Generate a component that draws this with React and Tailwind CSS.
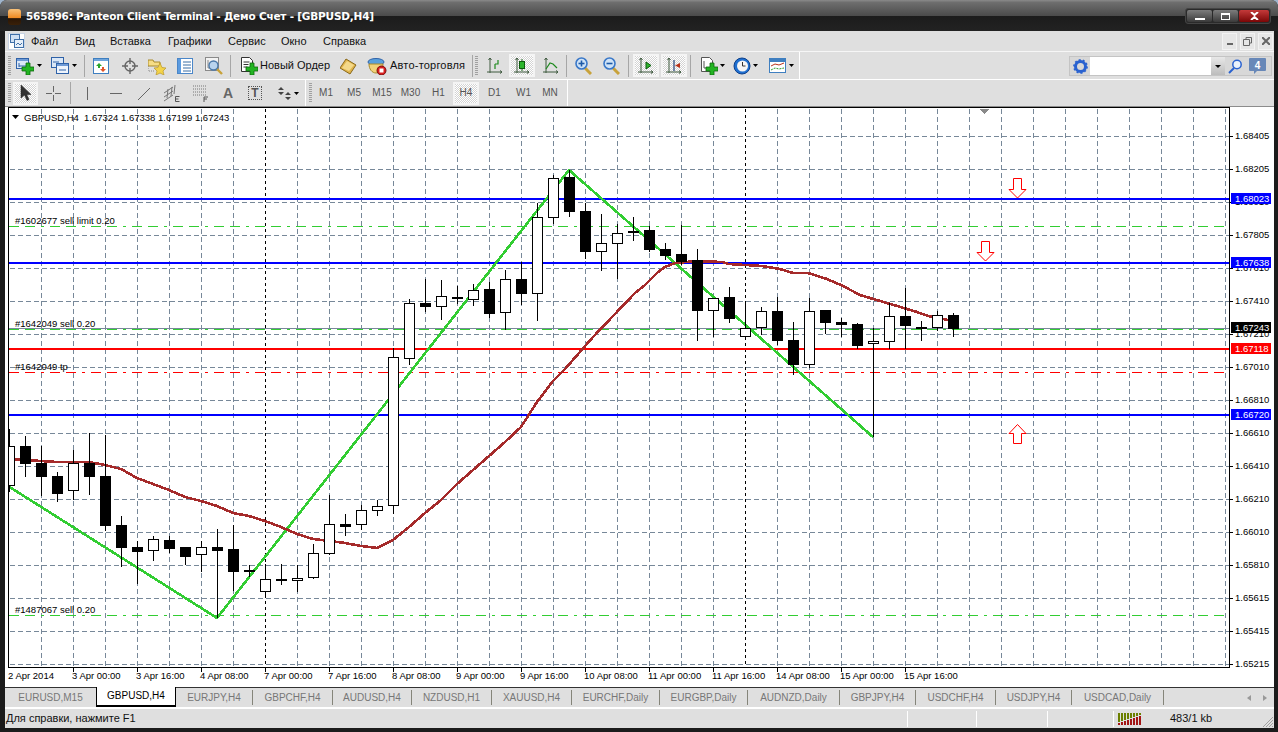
import { Fragment } from 'react';

const candles = [
  [446, 486, 429, 492, 1], [446, 464, 436, 477, 0], [463, 477, 446, 496, 0], [476, 494, 472, 502, 0],
  [463, 491, 450, 500, 1], [463, 477, 433, 495, 0], [476, 526, 435, 531, 0], [525, 548, 516, 567, 0],
  [547, 552, 541, 584, 0], [539, 551, 536, 561, 1], [540, 549, 536, 553, 0], [547, 557, 547, 565, 0],
  [547, 555, 541, 572, 1], [547, 551, 529, 618, 0], [549, 572, 525, 591, 0], [570, 572, 565, 577, 0],
  [579, 592, 564, 598, 1], [579, 581, 564, 585, 0], [578, 581, 565, 592, 1], [553, 578, 544, 579, 1],
  [524, 554, 495, 555, 1], [524, 527, 514, 536, 0], [510, 525, 505, 530, 1], [506, 511, 500, 516, 1],
  [357, 506, 348, 514, 1], [303, 359, 299, 365, 1], [303, 307, 279, 312, 0], [296, 307, 280, 320, 1],
  [297, 299, 286, 304, 0], [290, 300, 284, 306, 1], [289, 314, 282, 318, 0], [279, 313, 270, 330, 1],
  [279, 294, 262, 305, 0], [217, 294, 203, 321, 1], [178, 218, 175, 224, 1], [177, 212, 170, 217, 0],
  [211, 252, 203, 259, 0], [243, 252, 214, 271, 1], [233, 244, 224, 279, 1], [231, 233, 217, 241, 1],
  [230, 250, 226, 252, 0], [249, 256, 243, 260, 0], [254, 262, 225, 265, 0], [260, 311, 249, 341, 0],
  [298, 311, 298, 337, 1], [297, 319, 287, 323, 0], [328, 337, 302, 340, 1], [311, 328, 307, 335, 1],
  [311, 341, 297, 345, 0], [340, 365, 322, 375, 0], [311, 365, 298, 368, 1], [310, 323, 310, 334, 0],
  [322, 325, 318, 337, 0], [324, 346, 323, 349, 0], [341, 344, 328, 437, 1], [316, 342, 303, 349, 1],
  [316, 326, 288, 349, 0], [327, 328, 321, 341, 0], [315, 328, 311, 331, 1], [315, 329, 313, 337, 0],
];

const maLine = '9,459 25,460 41,461 57,462 73,462 89,462 105,465 121,469 137,478 153,484 169,490 185,497 201,501 217,506 233,513 249,516 265,521 281,527 297,534 313,539 329,541 345,543 361,546 377,548 393,540 409,527 425,513 441,500 457,484 473,470 489,456 505,442 521,427 537,402 553,381 565,369 593,337 635,293 645,285 657,273 665,267 675,263 697,261 722,262 729,264 762,266 780,269 793,273 808,273 827,279 843,286 860,295 880,301 897,306 917,312 928,316 948,320';

const priceLabels = [
  [136, '1.68405'], [169, '1.68205'], [202, '1.68010'], [235, '1.67805'], [268, '1.67610'], [301, '1.67410'],
  [334, '1.67210'], [367, '1.67010'], [400, '1.66810'], [433, '1.66610'], [466, '1.66410'], [499, '1.66210'],
  [532, '1.66010'], [565, '1.65810'], [598, '1.65615'], [631, '1.65415'], [664, '1.65215'],
];

const priceTags = [
  [199, '1.68023', '#0000ff', '#ffffff'],
  [263, '1.67638', '#0000ff', '#ffffff'],
  [328, '1.67243', '#000000', '#ffffff'],
  [349, '1.67118', '#ff0000', '#ffffff'],
  [415, '1.66720', '#0000ff', '#ffffff'],
];

const timeLabels = ['3 Apr 00:00', '3 Apr 16:00', '4 Apr 08:00', '7 Apr 00:00', '7 Apr 16:00', '8 Apr 08:00', '9 Apr 00:00', '9 Apr 16:00', '10 Apr 08:00', '11 Apr 00:00', '11 Apr 16:00', '14 Apr 08:00', '15 Apr 00:00', '15 Apr 16:00'];

const tabs = [
  ['EURUSD,M15', 'w-[91px]'], ['GBPUSD,H4', 'w-[80px]'], ['EURJPY,H4', 'w-[77px]'], ['GBPCHF,H4', 'w-[80px]'],
  ['AUDUSD,H4', 'w-[79px]'], ['NZDUSD,H1', 'w-[80px]'], ['XAUUSD,H4', 'w-[80px]'], ['EURCHF,Daily', 'w-[88px]'],
  ['EURGBP,Daily', 'w-[88px]'], ['AUDNZD,Daily', 'w-[92px]'], ['GBPJPY,H4', 'w-[76px]'], ['USDCHF,H4', 'w-[80px]'],
  ['USDJPY,H4', 'w-[76px]'], ['USDCAD,Daily', 'w-[92px]'],
];

const timeframes = [
  ['M1', 'w-[28px]'], ['M5', 'w-[28px]'], ['M15', 'w-[28px]'], ['M30', 'w-[29px]'], ['H1', 'w-[27px]'],
  ['H4', 'w-[28px]'], ['D1', 'w-[29px]'], ['W1', 'w-[29px]'], ['MN', 'w-[24px]'],
];

const range = (n, f) => Array.from({ length: n }, (_, i) => f(i));

const Ico = ({ w = 18, h = 18, c = '', children }) => (
  <svg width={w} height={h} viewBox={`0 0 ${w} ${h}`} className={`shrink-0 ${c}`}>{children}</svg>
);

const Caret = ({ c = 'ml-[3px]' }) => (
  <Ico w={5} h={3} c={c}><polygon points="0,0 5,0 2.5,3" fill="#000" /></Ico>
);

const Sep = ({ c }) => <div className={`w-px h-[22px] shrink-0 bg-[#a6a6a6] ${c}`} />;

const Grip = ({ c }) => (
  <div className={`w-[3px] h-[20px] shrink-0 bg-[repeating-linear-gradient(180deg,#a0a0a0_0,#a0a0a0_1px,transparent_1px,transparent_2px)] ${c}`} />
);

const Pressed = ({ c = '', children }) => (
  <div className={`h-[23px] flex items-center justify-center shrink-0 border-2 border-[#f4f4f4] bg-[conic-gradient(#ffffff_25%,#d4d4d4_0_50%,#ffffff_0_75%,#d4d4d4_0)] bg-[length:2px_2px] ${c}`}>
    {children}
  </div>
);

const Plus = ({ x, y, s = 10 }) => {
  const t = s / 3;
  return (
    <path
      d={`M${x + t} ${y}h${t}v${t}h${t}v${t}h${-t}v${t}h${-t}v${-t}h${-t}v${-t}h${t}z`}
      fill="#22b422"
      stroke="#0d6b0d"
      strokeWidth="0.8"
    />
  );
};

const MagGlass = ({ sign }) => (
  <Ico w={17} h={18}>
    <line x1="10" y1="11" x2="16" y2="17" stroke="#c8a23a" strokeWidth="3" />
    <circle cx="6.5" cy="6.5" r="5.5" fill="#cfe3f7" stroke="#3a78c8" strokeWidth="1.6" />
    <line x1="3.5" y1="6.5" x2="9.5" y2="6.5" stroke="#1d5aa8" strokeWidth="1.6" />
    {sign === '+' && <line x1="6.5" y1="3.5" x2="6.5" y2="9.5" stroke="#1d5aa8" strokeWidth="1.6" />}
  </Ico>
);

const Axes = ({ children }) => (
  <Ico w={16} h={18}>
    <path d="M3 1v15M0 15h15M1.5 3L3 1l1.5 2M13 13.5l2 1.5-2 1.5" fill="none" stroke="#3f5a3f" strokeWidth="1" />
    {children}
  </Ico>
);

const ToolbarOne = () => (
  <div className="flex items-center w-[795px] h-[27px] border-r border-r-white">
    <Grip c="ml-[3px]" />
    <Ico c="ml-[5px]">
      <rect x=".5" y="1.5" width="12" height="10" fill="#dbe8f7" stroke="#2f62a8" />
      <rect x="1" y="2" width="11" height="2" fill="#6f9bd6" />
      <path d="M3 6v4M3 9h7" stroke="#2f62a8" fill="none" />
      <Plus x={6} y={6} s={12} />
    </Ico>
    <Caret />
    <Ico c="ml-[9px]">
      <rect x=".5" y=".5" width="12" height="10" fill="#dbe8f7" stroke="#2f62a8" />
      <rect x="5.5" y="6.5" width="12" height="10" fill="#eef4fc" stroke="#2f62a8" />
      <rect x="6" y="7" width="11" height="2" fill="#6f9bd6" />
      <path d="M8 13h7M2 5h6" stroke="#2f62a8" />
    </Ico>
    <Caret />
    <Sep c="ml-[7px]" />
    <Ico w={17} c="ml-[8px]">
      <rect x=".5" y="1.5" width="15" height="15" fill="#fff" stroke="#3f7fc0" />
      <rect x="1" y="2" width="14" height="2" fill="#6fa5dc" />
      <path d="M6 6l3 3H7v2H5V9H3z" fill="#2aa52a" />
      <path d="M10 15l-3-3h2v-2h2v2h2z" fill="#e0552a" />
    </Ico>
    <Ico w={16} c="ml-[12px]">
      <circle cx="8" cy="9" r="5" fill="none" stroke="#666" strokeWidth="1.4" />
      <path d="M8 1v6M8 11v6M0 9h6M10 9h6" stroke="#666" strokeWidth="1.4" />
    </Ico>
    <Ico c="ml-[10px]">
      <path d="M0 3h5l1 2h6v4H0z" fill="#f6dd86" stroke="#a88a2c" />
      <path d="M0 9v5h7" fill="none" stroke="#888" strokeDasharray="1 1" />
      <polygon points="12,6 14,10.5 18,11 15,14 16,18 12,16 8,18 9,14 6,11 10,10.5" fill="#f3d34a" stroke="#b8962a" strokeWidth=".7" />
    </Ico>
    <Ico w={16} c="ml-[11px]">
      <rect x=".5" y="1.5" width="15" height="15" fill="#fff" stroke="#4a86c8" />
      <rect x="1" y="2" width="3" height="14" fill="#5b9be0" />
      <path d="M6 5h8M6 8h8M6 11h8M6 14h8" stroke="#3a6ea5" />
    </Ico>
    <Ico c="ml-[12px]">
      <rect x=".5" y=".5" width="13" height="13" fill="#f3f3f3" stroke="#8a8a8a" />
      <path d="M3 3v8h8" stroke="#888" fill="none" />
      <line x1="11" y1="11" x2="17" y2="17" stroke="#c8a23a" strokeWidth="2.4" />
      <circle cx="8.5" cy="8.5" r="4.5" fill="#b9d4ee" stroke="#4a78a8" strokeWidth="1.4" />
    </Ico>
    <Sep c="ml-[7px]" />
    <Ico c="ml-[9px]">
      <path d="M1.5 .5h8l3 3v11h-11z" fill="#fff" stroke="#333" />
      <path d="M3.5 5h6M3.5 7.5h5M3.5 10h4" stroke="#333" />
      <Plus x={6} y={6} s={12} />
    </Ico>
    <span className="ml-[2px] w-[69px] text-[11px] leading-none whitespace-nowrap text-[#111]">Новый Ордер</span>
    <Ico w={17} c="ml-[11px]">
      <polygon points="0,11 6,2 16,8 10,17" fill="#e0b44c" stroke="#8a6a1c" />
      <polygon points="2,11 7,4 14,8 9,14" fill="#f4d98a" />
    </Ico>
    <Ico w={20} c="ml-[10px]">
      <ellipse cx="9" cy="5" rx="8" ry="3.5" fill="#5aa0dc" stroke="#2f62a8" />
      <path d="M2 7c0 5 3 9 7 9s7-4 7-9z" fill="#f2d27a" stroke="#a88a2c" />
      <circle cx="14.5" cy="13.5" r="4.5" fill="#d81e1e" stroke="#7a0d0d" />
      <rect x="12.5" y="11.5" width="4" height="4" fill="#fff" />
    </Ico>
    <span className="ml-[3px] w-[76px] text-[11px] leading-none whitespace-nowrap tracking-[0.2px] text-[#111]">Авто-торговля</span>
    <Sep c="ml-[6px] bg-[#8c8c8c]" />
    <Grip c="ml-[2px]" />
    <div className="ml-[9px]">
      <Axes><path d="M8 12V7M8 7h3V3" stroke="#1d8a1d" fill="none" strokeWidth="1.2" /></Axes>
    </div>
    <Pressed c="ml-[6px] w-[26px]">
      <Axes><path d="M8 2v12" stroke="#1d6b1d" /><rect x="5.5" y="4.5" width="5" height="7" fill="#2cb52c" stroke="#0d5b0d" /></Axes>
    </Pressed>
    <div className="ml-[8px]">
      <Axes><path d="M3 12l4-6 3 1 4 4" stroke="#1d8a1d" fill="none" strokeWidth="1.2" /></Axes>
    </div>
    <Sep c="ml-[7px]" />
    <div className="ml-[8px]"><MagGlass sign="+" /></div>
    <div className="ml-[11px]"><MagGlass sign="-" /></div>
    <Sep c="ml-[8px]" />
    <Pressed c="ml-[4px] w-[26px]">
      <Axes><polygon points="8,5 8,12 13,8.5" fill="#2cb52c" stroke="#0d5b0d" /></Axes>
    </Pressed>
    <Pressed c="ml-[2px] w-[26px]">
      <Axes><path d="M8 3v11" stroke="#3f5a8a" strokeWidth="1.4" /><polygon points="9,8.5 14,6 14,11" fill="#b8321a" /></Axes>
    </Pressed>
    <Sep c="ml-[3px]" />
    <Ico c="ml-[9px]">
      <path d="M1.5 .5h8l3 3v11h-11z" fill="#fff" stroke="#555" />
      <path d="M4 4v7h6" stroke="#555" fill="none" />
      <Plus x={6} y={6} s={12} />
    </Ico>
    <Caret c="ml-[2px]" />
    <Ico c="ml-[8px]">
      <circle cx="9" cy="9" r="8" fill="#1f6fd0" stroke="#0d3f8a" />
      <circle cx="9.5" cy="9" r="5.5" fill="#f4f4f4" />
      <path d="M9.5 5v4h3" stroke="#333" fill="none" />
    </Ico>
    <Caret c="ml-[2px]" />
    <Ico c="ml-[11px]">
      <rect x=".5" y="1.5" width="16" height="14" fill="#fff" stroke="#3f7fc0" />
      <rect x="1" y="2" width="15" height="3" fill="#3f7fc0" />
      <path d="M2 9l4-2 4 1 5-2" stroke="#b8321a" fill="none" />
      <path d="M2 13l4-2 4 1 5-1" stroke="#2a9a2a" fill="none" strokeDasharray="2 1" />
    </Ico>
    <Caret c="ml-[2px]" />
  </div>
);

const ToolbarTwo = () => (
  <div className="flex items-center w-[563px] h-[26px] border-r border-r-white">
    <Grip c="ml-[3px]" />
    <Pressed c="ml-[2px] w-[25px]">
      <Ico w={12} h={16}><polygon points="1,0 1,13 4.5,10 7,15.5 9,14.5 6.8,9.5 11,9.5" fill="#333" stroke="#222" strokeWidth=".5" /></Ico>
    </Pressed>
    <Ico w={15} h={15} c="ml-[8px]"><path d="M7.5 0v6M7.5 9v6M0 7.5h6M9 7.5h6" stroke="#666" strokeWidth="1" /></Ico>
    <Sep c="ml-[9px]" />
    <Ico w={15} h={15} c="ml-[9px]"><path d="M7.5 1v13" stroke="#666" /></Ico>
    <Ico w={15} h={15} c="ml-[13px]"><path d="M2 7.5h12" stroke="#666" /></Ico>
    <Ico w={15} h={15} c="ml-[13px]"><path d="M2 14L14 2" stroke="#666" /></Ico>
    <Ico w={17} h={18} c="ml-[12px]">
      <path d="M1 9l9-6M1 13l9-6M1 17l9-6M4 14l1-9M8 12l1-9M11 10l1-9" stroke="#777" fill="none" />
      <path d="M12.5 12.5h4M12.5 12.5v5h4M12.5 15h3" stroke="#555" fill="none" />
    </Ico>
    <Ico w={16} h={18} c="ml-[12px]">
      <path d="M1 2h13M1 5h13M1 8h13M1 11h13" stroke="#777" strokeDasharray="1 1" />
      <path d="M12 13v5M12 13h4M12 15h3" stroke="#555" fill="none" />
    </Ico>
    <span className="ml-[13px] w-[14px] text-center text-[14px] leading-none font-bold text-[#666]">A</span>
    <div className="ml-[13px] w-[14px] h-[14px] flex items-center justify-center border border-dotted border-[#555] text-[12px] leading-none font-bold text-[#555] shrink-0">T</div>
    <Ico w={15} h={15} c="ml-[15px]">
      <path d="M1 4l3-3 3 3zM1 6l3 3 3-3z" fill="#444" />
      <path d="M8 9l3-3 3 3zM8 11l3 3 3-3z" fill="#444" />
    </Ico>
    <Caret c="ml-[2px]" />
    <div className="ml-[6px] w-px h-[26px] bg-white shrink-0" />
    <Grip c="ml-[3px]" />
    {timeframes.map(([name, w]) => (
      <div key={name} className={`${w} h-[24px] flex items-center justify-center shrink-0`}>
        {name === 'H4' ? (
          <Pressed c="w-[26px]"><span className="text-[10px] leading-none text-[#555]">{name}</span></Pressed>
        ) : (
          <span className="text-[10px] leading-none text-[#555]">{name}</span>
        )}
      </div>
    ))}
  </div>
);

const SearchGroup = () => (
  <div className="ml-auto mr-[2px] mt-[4px] flex items-stretch h-[20px] border border-[#c4c4c4] bg-[#d8d8d8]">
    <div className="w-[20px] flex items-center justify-center">
      <Ico w={15} h={15}>
        <circle cx="7.5" cy="7.5" r="5" fill="none" stroke="#2a62d0" strokeWidth="3" />
        <circle cx="7.5" cy="7.5" r="6.6" fill="none" stroke="#2a62d0" strokeWidth="1.6" strokeDasharray="2 2.15" />
      </Ico>
    </div>
    <div className="w-[121px] bg-white" />
    <div className="w-[14px] flex items-center justify-center bg-[linear-gradient(180deg,#e8e8e8,#bcbcbc)]"><Ico w={6} h={3}><polygon points="0,0 6,0 3,3" fill="#000" /></Ico></div>
    <div className="w-[19px] flex items-center justify-center">
      <Ico w={14} h={15}>
        <circle cx="9" cy="5.5" r="4.2" fill="#eaf2fc" stroke="#2a62d0" strokeWidth="1.5" />
        <path d="M6 9l-5 5" stroke="#2a62d0" strokeWidth="2" />
      </Ico>
    </div>
    <div className="w-[27px] flex items-center justify-center">
      <Ico w={17} h={17}>
        <path d="M1 0h15a1 1 0 0 1 1 1v11a1 1 0 0 1-1 1H8l-3 3v-3H1a1 1 0 0 1-1-1V1a1 1 0 0 1 1-1z" fill="#6888b8" />
        <text x="8.5" y="10.5" textAnchor="middle" fontSize="10" fontWeight="700" fill="#fff" fontFamily="Liberation Sans, sans-serif">4</text>
      </Ico>
    </div>
  </div>
);

const Chart = () => (
  <svg width="1269" height="579" viewBox="5 107 1269 579" className="block shrink-0" fontFamily="Liberation Sans, sans-serif" fontSize="9.5">
    <defs>
      <clipPath id="plot"><rect x="9" y="108" width="1220" height="559" /></clipPath>
    </defs>
    <rect x="5" y="107" width="1269" height="579" fill="#fff" />
    <g clipPath="url(#plot)" shapeRendering="crispEdges">
      {range(17, (i) => (
        <line key={i} x1="10" x2="1229" y1={136.5 + 33 * i} y2={136.5 + 33 * i} stroke="#778899" strokeDasharray="5 3" />
      ))}
      {range(38, (i) => {
        const x = 41 + 32 * i;
        const black = x === 265 || x === 745;
        return <line key={i} x1={x + 0.5} x2={x + 0.5} y1="109" y2="667" stroke={black ? '#000' : '#778899'} strokeDasharray={black ? '3 3' : '5 3'} />;
      })}
      <line x1="9" x2="1229" y1="226.5" y2="226.5" stroke="#32cd32" strokeDasharray="10 6 10 6 3 6" />
      <line x1="9" x2="1229" y1="329.5" y2="329.5" stroke="#32cd32" strokeDasharray="10 6 10 6 3 6" />
      <line x1="9" x2="1229" y1="615.5" y2="615.5" stroke="#32cd32" strokeDasharray="10 6 10 6 3 6" />
      <line x1="9" x2="1229" y1="372.5" y2="372.5" stroke="#ff0000" strokeDasharray="10 6 10 6 3 6" />
      <line x1="9" x2="1229" y1="328.5" y2="328.5" stroke="#778899" />
      <line x1="9" x2="1229" y1="199" y2="199" stroke="#0000ff" strokeWidth="2" />
      <line x1="9" x2="1229" y1="263" y2="263" stroke="#0000ff" strokeWidth="2" />
      <line x1="9" x2="1229" y1="415" y2="415" stroke="#0000ff" strokeWidth="2" />
      <line x1="9" x2="1229" y1="349" y2="349" stroke="#ff0000" strokeWidth="2" />
      <polyline points="8,486 217,618 569,170 873,437" fill="none" stroke="#32cd32" strokeWidth="2.6" />
      <polyline points={maLine} fill="none" stroke="#a52a2a" strokeWidth="2.6" />
      {candles.map(([top, bottom, high, low, up], i) => {
        const x = 9 + 16 * i;
        return (
          <Fragment key={x}>
            <line x1={x + 0.5} x2={x + 0.5} y1={high} y2={low} stroke="#000" />
            <rect x={x - 4.5} y={top + 0.5} width="10" height={Math.max(bottom - top - 1, 1)} fill={up ? '#fff' : '#000'} stroke="#000" />
          </Fragment>
        );
      })}
      <polygon points="979,109 989,109 984,114" fill="#8a8a8a" />
    </g>
    <polygon points="1013.5,178.5 1021.5,178.5 1021.5,189.5 1026,189.5 1017.5,198 1009,189.5 1013.5,189.5" fill="#fff" stroke="#ff0000" />
    <polygon points="981.5,241.5 989.5,241.5 989.5,252.5 994,252.5 985.5,261 977,252.5 981.5,252.5" fill="#fff" stroke="#ff0000" />
    <polygon points="1017.5,424.5 1026,433.5 1021.5,433.5 1021.5,443.5 1013.5,443.5 1013.5,433.5 1009,433.5" fill="#fff" stroke="#ff0000" />
    <rect x="8.5" y="107.5" width="1221" height="560" fill="none" stroke="#000" shapeRendering="crispEdges" />

    <polygon points="12,115 19,115 15.5,119" fill="#000" />
    <text x="24" y="120.5" fill="#000">GBPUSD,H4</text>
    <text x="84" y="120.5" fill="#000">1.67324 1.67338 1.67199 1.67243</text>
    <text x="15" y="223.5" fill="#000">#1602677 sell limit 0.20</text>
    <text x="15" y="327" fill="#000">#1642049 sell 0.20</text>
    <text x="15" y="370" fill="#000">#1642049 tp</text>
    <text x="15" y="613" fill="#000">#1487067 sell 0.20</text>

    {priceLabels.map(([y, t]) => (
      <Fragment key={t}>
        <line x1="1230" x2="1233" y1={y + 0.5} y2={y + 0.5} stroke="#000" shapeRendering="crispEdges" />
        <text x="1235" y={y + 3} fill="#000">{t}</text>
      </Fragment>
    ))}
    {priceTags.map(([y, t, bg, fg]) => (
      <Fragment key={t}>
        <rect x="1231" y={y - 6} width="40" height="11" fill={bg} />
        <text x="1235" y={y + 3} fill={fg}>{t}</text>
      </Fragment>
    ))}

    <text x="8" y="679" fill="#000">2 Apr 2014</text>
    {timeLabels.map((t, i) => (
      <Fragment key={t}>
        <line x1={73.5 + 64 * i} x2={73.5 + 64 * i} y1="668" y2="672" stroke="#000" shapeRendering="crispEdges" />
        <text x={72 + 64 * i} y="679" fill="#000">{t}</text>
      </Fragment>
    ))}
  </svg>
);

const App = () => {
  return (
    <div className="w-[1278px] h-[732px] overflow-hidden bg-[#9fb4cc] font-['Liberation_Sans',sans-serif]">
      <div className="w-full h-full flex flex-col rounded-t-[7px] overflow-hidden bg-[#1b1b1b]">
        {/* title bar */}
        <div className="h-[31px] shrink-0 flex items-start bg-[linear-gradient(180deg,#8a8a8a_0,#6e6e6e_8%,#4c4c4c_50%,#1c1c1c_51%,#222222_100%)]">
          <div className="ml-[8px] mt-[9px] w-[13px] h-[16px] rounded-[3px] bg-[linear-gradient(180deg,#f9c27a_0,#f08a22_55%,#2a1606_60%,#3a2008_100%)]" />
          <span className="ml-[5px] mt-[8px] text-[10.5px] leading-[17px] font-['DejaVu_Sans',sans-serif] font-bold text-white whitespace-nowrap tracking-[-0.2px]">565896: Panteon Client Terminal - Демо Счет - [GBPUSD,H4]</span>
          <div className="ml-auto mr-[7px] mt-[8px] flex h-[16px] p-px gap-px rounded-[3px] bg-[#2a2a2a] border border-[#444]">
            <div className="w-[25px] flex items-center justify-center rounded-[2px] bg-[linear-gradient(180deg,#7c7c7c,#3a3a3a)]"><div className="w-[10px] h-[2px] mt-[5px] bg-white" /></div>
            <div className="w-[25px] flex items-center justify-center rounded-[2px] bg-[linear-gradient(180deg,#7c7c7c,#3a3a3a)]"><div className="w-[9px] h-[7px] border border-white border-t-2" /></div>
            <div className="w-[30px] flex items-center justify-center rounded-[2px] bg-[linear-gradient(180deg,#c43a3a,#7a0606)]">
              <Ico w={9} h={8}><path d="M1 0l3.5 3L8 0M1 8l3.5-3L8 8" stroke="#fff" strokeWidth="2" fill="none" /></Ico>
            </div>
          </div>
        </div>

        <div className="flex-1 flex flex-col pl-[5px] pr-[4px] pb-[4px] min-h-0">
          {/* menu */}
          <div className="h-[20px] shrink-0 flex items-center bg-[#dfdfdf] text-[11px] text-[#111]">
            <div className="ml-[3px] w-[17px] h-[17px] flex items-center justify-center bg-white border border-[#c8d4e4] shrink-0">
              <Ico w={14} h={14}>
                <rect x=".5" y=".5" width="9" height="8" fill="#cfe0f4" stroke="#3f6fa8" />
                <rect x="4.5" y="5.5" width="9" height="8" fill="#e6eff9" stroke="#3f6fa8" />
                <path d="M6 11l2-2 2 2 2-2" stroke="#3f6fa8" fill="none" />
              </Ico>
            </div>
            <span className="ml-[6px] w-[44px]">Файл</span>
            <span className="w-[35px]">Вид</span>
            <span className="w-[58px]">Вставка</span>
            <span className="w-[60px]">Графики</span>
            <span className="w-[53px]">Сервис</span>
            <span className="w-[42px]">Окно</span>
            <span>Справка</span>
            <div className="ml-auto mr-px flex gap-[3px]">
              <div className="w-[15px] h-[17px] flex items-end justify-center pb-[4px] bg-[#e6e6e6] border border-[#f2f2f2]"><div className="w-[6px] h-[2px] bg-[#666]" /></div>
              <div className="w-[15px] h-[17px] flex items-center justify-center bg-[#e6e6e6] border border-[#f2f2f2]">
                <Ico w={9} h={9}><path d="M3 2.5V.5h5.5v5.5H6.5M.5 2.5h6v6h-6z" fill="none" stroke="#666" /></Ico>
              </div>
              <div className="w-[15px] h-[17px] flex items-center justify-center bg-[#e6e6e6] border border-[#f2f2f2]">
                <Ico w={8} h={8}><path d="M0 0l8 8M8 0L0 8" stroke="#666" strokeWidth="2" /></Ico>
              </div>
            </div>
          </div>

          {/* toolbars */}
          <div className="h-[55px] shrink-0 flex flex-col bg-[#dfdfdf] border-t border-[#f6f6f6]">
            <div className="flex h-[28px] shrink-0 border-b border-white">
              <ToolbarOne />
              <SearchGroup />
            </div>
            <div className="flex h-[26px] shrink-0">
              <ToolbarTwo />
            </div>
          </div>
          <div className="h-px shrink-0 bg-[#8c8c8c]" />

          <Chart />

          {/* symbol tabs */}
          <div className="h-[22px] shrink-0 flex bg-white">
            <div className="flex-1 flex mt-px h-[20px] bg-[#dfdfdf] border-t border-[#333] text-[10px] leading-none text-[#777]">
              {tabs.map(([name, w], i) => (
                i === 1 ? (
                  <div key={name} className={`${w} -mt-px h-[20px] flex items-center justify-center bg-white border-x border-b-2 border-black text-black shrink-0`}>{name}</div>
                ) : (
                  <div key={name} className={`${w} h-[15px] mt-[2px] flex items-center justify-center shrink-0 ${i === 0 ? '' : 'border-r border-[#85857a]'}`}>{name}</div>
                )
              ))}
              <div className="ml-auto mr-[7px] flex items-center gap-[12px]">
                <Ico w={4} h={6}><polygon points="4,0 4,6 0,3" fill="#999" /></Ico>
                <Ico w={4} h={6}><polygon points="0,0 0,6 4,3" fill="#999" /></Ico>
              </div>
            </div>
          </div>

          {/* status bar */}
          <div className="flex-1 flex items-center bg-[#dfdfdf] border-t border-white text-[11px] text-[#111]">
            <span className="ml-px w-[901px]">Для справки, нажмите F1</span>
            <div className="w-px h-[16px] bg-white" />
            <div className="w-[68px]" />
            <div className="w-px h-[16px] bg-white" />
            <div className="w-[70px]" />
            <div className="w-px h-[16px] bg-white" />
            <div className="w-[65px]" />
            <div className="w-px h-[16px] bg-white" />
            <Ico w={24} h={13} c="ml-[4px]">
              {range(8, (i) => {
                const red = 2 + i;
                return (
                  <Fragment key={i}>
                    <rect x={i * 3} y="1" width="2" height={11 - red} fill="#6b7f00" />
                    <rect x={i * 3} y={13 - red} width="2" height={red} fill="#a31515" />
                  </Fragment>
                );
              })}
            </Ico>
            <span className="ml-[28px] whitespace-nowrap">483/1 kb</span>
            <Ico w={12} h={12} c="ml-auto mt-[6px]">
              <path d="M11 1L1 11M11 4L4 11M11 7L7 11M11 10L10 11" stroke="#a0a0a0" />
            </Ico>
          </div>
        </div>
      </div>
    </div>
  );
};

export default App;
